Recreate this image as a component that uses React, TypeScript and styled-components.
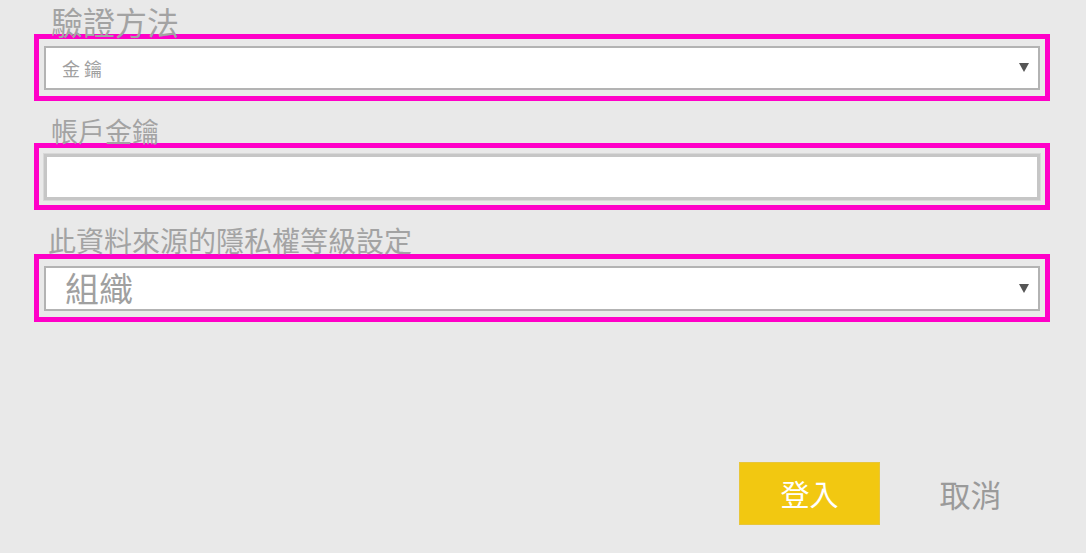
import React from "react";
import styled, { createGlobalStyle } from "styled-components";

const Global = createGlobalStyle`
  html, body { margin: 0; padding: 0; background: #e9e9e9; }
  body { font-family: "Noto Sans CJK TC", "Noto Sans", sans-serif; }
`;

const Page = styled.div`
  width: 1086px;
  height: 553px;
  box-sizing: border-box;
  padding: 0 36px 0 34px;
  background: #e9e9e9;
  display: flex;
  flex-direction: column;
`;

const Label = styled.div<{ $h: number; $size: number; $indent: number; $shift: number }>`
  height: ${(p) => p.$h}px;
  display: flex;
  align-items: flex-end;
  padding-left: ${(p) => p.$indent}px;
  font-size: ${(p) => p.$size}px;
  line-height: 1;
  color: #a3a3a3;
  white-space: nowrap;

  & > span {
    display: block;
    transform: translateY(${(p) => p.$shift}px);
  }
`;

const Frame = styled.div<{ $h: number }>`
  height: ${(p) => p.$h}px;
  box-sizing: border-box;
  border: 5px solid #ff00c8;
  padding: 0 5px;
  display: flex;
  align-items: center;
`;

const SelectBox = styled.div<{ $h: number; $indent: number }>`
  flex: 1;
  height: ${(p) => p.$h}px;
  box-sizing: border-box;
  background: #ffffff;
  border: 2px solid #b3b3b3;
  display: flex;
  align-items: center;
  justify-content: space-between;
  padding: 0 9px 0 ${(p) => p.$indent}px;
`;

const SelectValue = styled.span<{ $size: number; $spacing: number }>`
  font-size: ${(p) => p.$size}px;
  letter-spacing: ${(p) => p.$spacing}px;
  line-height: 1;
  color: #a0a0a0;
`;

const Arrow = styled.svg`
  width: 10px;
  height: 9px;
  flex: none;
`;

const TextInput = styled.input`
  flex: 1;
  height: 46px;
  box-sizing: border-box;
  background: #ffffff;
  border: 3px solid #c6c6c6;
  box-shadow: 0 0 0 1px #d8d8d8;
  outline: none;
  margin: 0;
  padding: 0 12px;
  font-family: inherit;
  font-size: 16px;
`;

const ButtonRow = styled.div`
  margin-top: 140px;
  display: flex;
  justify-content: flex-end;
  gap: 20px;
  padding-right: 9px;
`;

const PrimaryButton = styled.button`
  width: 141px;
  height: 63px;
  box-sizing: border-box;
  border: 1px solid #e8c63a;
  background: #f2c811;
  color: #ffffff;
  font-family: inherit;
  font-size: 29px;
  line-height: 1;
  padding: 0;
  display: flex;
  align-items: center;
  justify-content: center;
`;

const TextButton = styled.button`
  width: 141px;
  height: 63px;
  border: none;
  background: transparent;
  color: #9a9a9a;
  font-family: inherit;
  font-size: 31px;
  line-height: 1;
  padding: 0;
  display: flex;
  align-items: center;
  justify-content: center;
`;

const DownArrow = () => (
  <Arrow viewBox="0 0 10 9">
    <path d="M0 0 H10 L5 9 Z" fill="#555555" />
  </Arrow>
);

export default function App() {
  return (
    <>
      <Global />
      <Page>
        <Label $h={34} $size={32} $indent={17} $shift={3}>
          <span>驗證方法</span>
        </Label>
        <Frame $h={67}>
          <SelectBox $h={44} $indent={16}>
            <SelectValue $size={18} $spacing={4}>金鑰</SelectValue>
            <DownArrow />
          </SelectBox>
        </Frame>

        <Label $h={42} $size={27} $indent={17} $shift={1}>
          <span>帳戶金鑰</span>
        </Label>
        <Frame $h={67}>
          <TextInput type="text" />
        </Frame>

        <Label $h={44} $size={28} $indent={14} $shift={0}>
          <span>此資料來源的隱私權等級設定</span>
        </Label>
        <Frame $h={68}>
          <SelectBox $h={45} $indent={19}>
            <SelectValue $size={34} $spacing={0}>組織</SelectValue>
            <DownArrow />
          </SelectBox>
        </Frame>

        <ButtonRow>
          <PrimaryButton>登入</PrimaryButton>
          <TextButton>取消</TextButton>
        </ButtonRow>
      </Page>
    </>
  );
}
